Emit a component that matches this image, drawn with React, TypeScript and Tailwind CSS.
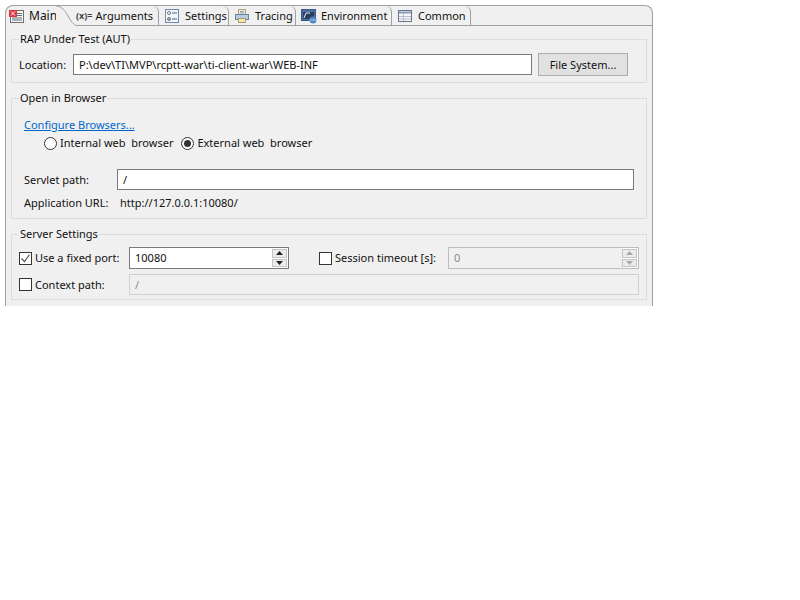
import type { ReactNode } from "react";

function MainIcon() {
  return (
    <svg width="16" height="16" viewBox="0 0 16 16" className="shrink-0">
      <rect x="1.5" y="2.5" width="13" height="12" fill="#fdf8e8" stroke="#6b6f73" />
      <path d="M8 5.5h5M8 7.5h5M3 10h10M3 12h10" stroke="#4f6f94" />
      <rect x="0" y="2" width="8" height="7" fill="#e0353f" />
      <path d="M2 3.5l4 4M6 3.5l-4 4" stroke="#fff" />
    </svg>
  );
}

function SettingsIcon() {
  return (
    <svg width="16" height="16" viewBox="0 0 16 16" className="shrink-0">
      <rect x="1.5" y="1.5" width="13" height="13" fill="#f2f6fb" stroke="#6d8bad" />
      <circle cx="5" cy="5" r="1.5" fill="#fff" stroke="#777" />
      <circle cx="5" cy="11" r="1.5" fill="#b0b0b0" stroke="#777" />
      <path d="M8 5h5M8 11h5" stroke="#47698f" />
    </svg>
  );
}

function TracingIcon() {
  return (
    <svg width="16" height="16" viewBox="0 0 16 16" className="shrink-0">
      <path d="M4.5 1.5h7v5h-7z" fill="#fbf4da" stroke="#a89c78" />
      <path d="M6 3.5h4M6 5h4" stroke="#8d9bb0" />
      <rect x="1.5" y="6.5" width="13" height="5" fill="#b9cbe0" stroke="#6b84a3" />
      <rect x="4.5" y="10.5" width="7" height="4" fill="#f7e6a8" stroke="#a89c78" />
    </svg>
  );
}

function EnvironmentIcon() {
  return (
    <svg width="16" height="16" viewBox="0 0 16 16" className="shrink-0">
      <rect x="0.5" y="1.5" width="14" height="11" fill="#4a6f9f" stroke="#3a5a86" />
      <path d="M2 4h11v7H2z" fill="#2b3f61" />
      <path d="M3 10l2-5h4" stroke="#e8eef6" fill="none" />
      <circle cx="12" cy="12" r="3.5" fill="#4d86c4" />
      <path d="M8.5 12h7" stroke="#a9c9ea" />
    </svg>
  );
}

function CommonIcon() {
  return (
    <svg width="16" height="16" viewBox="0 0 16 16" className="shrink-0">
      <rect x="1.5" y="2.5" width="13" height="11" fill="#f4f6f9" stroke="#65768c" />
      <path d="M2 4.5h12" stroke="#8d9bb0" strokeWidth="2" />
      <path d="M6.5 6v7M2 8.5h12M2 11h12" stroke="#b4bdc9" />
    </svg>
  );
}

function Tab({ icon, label, className }: { icon: ReactNode; label: string; className: string }) {
  return (
    <div className={`flex h-[20px] shrink-0 items-center rounded-tr-[6px] border-r border-b border-[#a0a0a0] ${className}`}>
      {icon}
      <span>{label}</span>
    </div>
  );
}

function Group({ title, className, children }: { title: string; className: string; children: ReactNode }) {
  return (
    <fieldset className={`mx-[5px] border border-[#dcdcdc] pl-[7px] ${className}`}>
      <legend className="px-[1px] leading-[16px]">{title}</legend>
      {children}
    </fieldset>
  );
}

function Radio({ label, checked }: { label: string; checked?: boolean }) {
  return (
    <div className="flex items-center gap-[3px]">
      <span className="flex h-[13px] w-[13px] items-center justify-center rounded-full border border-[#333] bg-white">
        {checked && <span className="h-[7px] w-[7px] rounded-full bg-[#333]" />}
      </span>
      <span className="whitespace-pre">{label}</span>
    </div>
  );
}

function Checkbox({ label, checked }: { label: string; checked?: boolean }) {
  return (
    <div className="flex items-center gap-[3px]">
      <span className="flex h-[13px] w-[13px] items-center justify-center border border-[#333] bg-white">
        {checked && (
          <svg width="11" height="11" viewBox="0 0 11 11">
            <path d="M1.5 5.5l3 3 5-7" fill="none" stroke="#555" strokeWidth="1.2" />
          </svg>
        )}
      </span>
      <span>{label}</span>
    </div>
  );
}

function SpinButtons({ disabled }: { disabled?: boolean }) {
  const color = disabled ? "#a8a8a8" : "#222";
  return (
    <div className="flex h-full w-[16px] flex-col gap-[1px] bg-white py-[1px] pr-[1px]">
      <div className="flex flex-1 items-center justify-center border border-[#c4c4c4] bg-[#ececec]">
        <svg width="7" height="4" viewBox="0 0 7 4"><path d="M3.5 0L7 4H0z" fill={color} /></svg>
      </div>
      <div className="flex flex-1 items-center justify-center border border-[#c4c4c4] bg-[#ececec]">
        <svg width="7" height="4" viewBox="0 0 7 4"><path d="M0 0h7L3.5 4z" fill={color} /></svg>
      </div>
    </div>
  );
}

export default function App() {
  return (
    <div className="h-[600px] w-[800px] bg-white pt-[5px] pl-[5px] text-[11px] leading-[16px] text-[#111] [font-family:'Noto_Sans','Open_Sans',sans-serif]">
      <div className="h-[301px] w-[648px] rounded-t-[8px] border-x border-t border-[#a0a0a0] bg-[#f0f0f0]">
        {/* Tab strip */}
        <div className="relative flex h-[20px]">
          <div className="flex h-[20px] w-[70px] shrink-0 items-center gap-[4px] pl-[3px] text-[12px]">
            <MainIcon />
            <span>Main</span>
          </div>
          <Tab
            className="w-[83px]"
            label="Arguments"
            icon={<span className="mr-[3px] text-[9px] font-bold text-[#444]">(x)=</span>}
          />
          <Tab className="w-[70px] gap-[5px] pl-[5px]" label="Settings" icon={<SettingsIcon />} />
          <Tab className="w-[67px] gap-[5px] pl-[5px]" label="Tracing" icon={<TracingIcon />} />
          <Tab className="w-[96px] gap-[4px] pl-[5px]" label="Environment" icon={<EnvironmentIcon />} />
          <Tab className="w-[79px] gap-[5px] pl-[5px]" label="Common" icon={<CommonIcon />} />
          <div className="flex-1 border-b border-[#a0a0a0]" />
          {/* curved edge of the active tab */}
          <svg width="24" height="20" viewBox="0 0 24 20" className="absolute top-0 left-[50px]">
            <path d="M0 20V0c6 0 9 5 12 10s5 9 9 9.5h3" fill="#f0f0f0" />
            <path d="M0 0c6 0 9 5 12 10s5 9 9 9.5h3" fill="none" stroke="#a0a0a0" />
          </svg>
        </div>

        {/* Form */}
        <Group title="RAP Under Test (AUT)" className="mt-[5px] h-[52px]">
          <div className="flex items-center pt-[6px]">
            <span className="w-[54px]">Location:</span>
            <div className="flex h-[21px] w-[459px] items-center border border-[#7a7a7a] bg-white pl-[5px]">P:\dev\TI\MVP\rcptt-war\ti-client-war\WEB-INF</div>
            <button type="button" className="ml-[6px] h-[23px] w-[90px] border border-[#adadad] bg-[#e1e1e1]">File System...</button>
          </div>
        </Group>

        <Group title="Open in Browser" className="mt-[7px] h-[129px]">
          <div className="pl-[5px]">
            <a className="block pt-[11px] text-[#0066cc] underline">Configure Browsers...</a>
            <div className="mt-[2px] flex gap-[8px] pl-[20px]">
              <Radio label="Internal web  browser" />
              <Radio label="External web  browser" checked />
            </div>
            <div className="mt-[18px] flex items-center">
              <span className="w-[93px]">Servlet path:</span>
              <div className="h-[21px] w-[517px] border border-[#7a7a7a] bg-white pl-[5px] leading-[19px]">/</div>
            </div>
            <div className="mt-[5px] flex">
              <span className="w-[96px]">Application URL:</span>
              <span>http://127.0.0.1:10080/</span>
            </div>
          </div>
        </Group>

        <Group title="Server Settings" className="mt-[7px] h-[74px]">
          <div className="flex h-[22px] items-center mt-[5px]">
            <div className="w-[110px]"><Checkbox label="Use a fixed port:" checked /></div>
            <div className="flex h-[22px] w-[160px] items-center justify-between border border-[#7a7a7a] bg-white pl-[5px]">
              <span>10080</span>
              <SpinButtons />
            </div>
            <div className="ml-[30px] w-[129px]"><Checkbox label="Session timeout [s]:" /></div>
            <div className="flex h-[22px] w-[191px] items-center justify-between border border-[#bcbcbc] bg-[#f0f0f0] pl-[5px] text-[#8a8a8a]">
              <span>0</span>
              <SpinButtons disabled />
            </div>
          </div>
          <div className="mt-[5px] flex h-[21px] items-center">
            <div className="w-[110px]"><Checkbox label="Context path:" /></div>
            <div className="h-[21px] w-[510px] border border-[#d0d0d0] bg-[#f0f0f0] pl-[5px] leading-[19px] text-[#8a8a8a]">/</div>
          </div>
        </Group>
      </div>
    </div>
  );
}
